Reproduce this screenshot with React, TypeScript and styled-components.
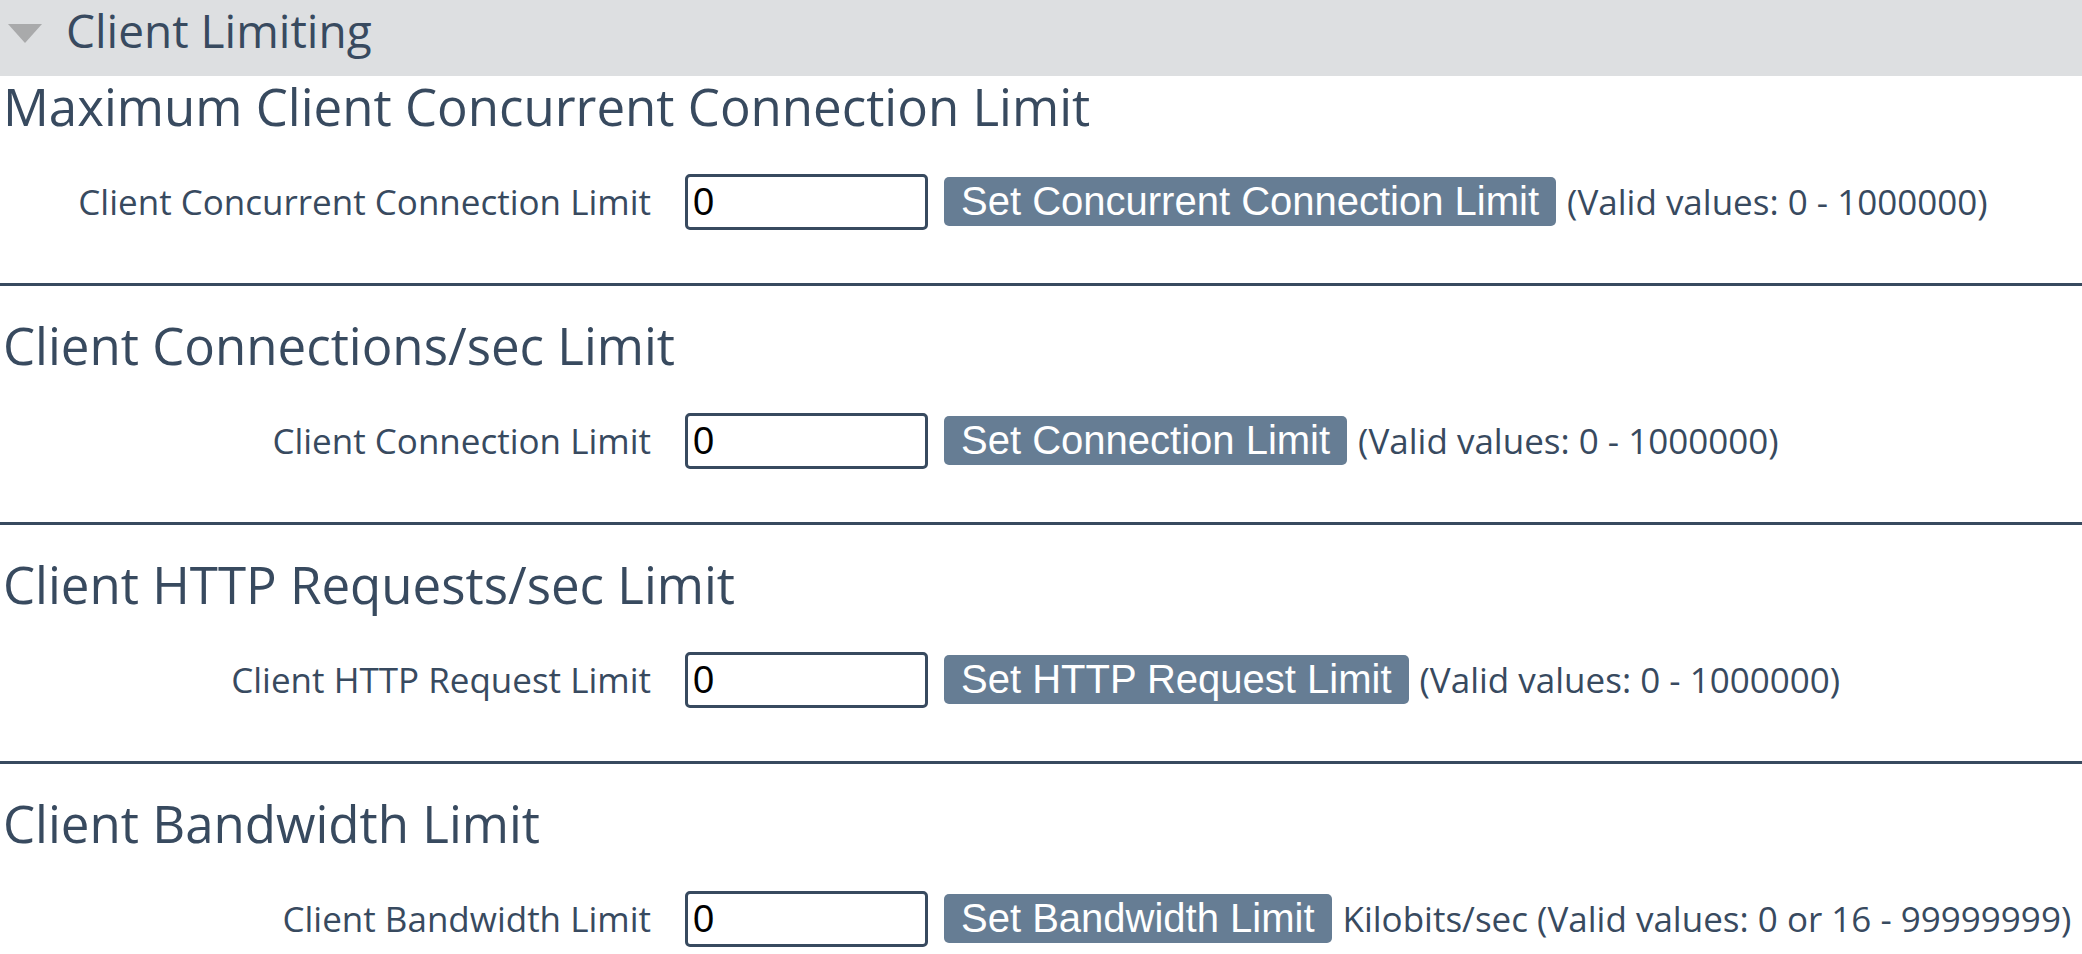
import React from "react";
import styled, { createGlobalStyle } from "styled-components";

type LimitSetting = {
    id: string;
    title: string;
    label: string;
    action: string;
    unit?: string;
    range: string;
};

const settings: LimitSetting[] = [
    {
        id: "concurrent",
        title: "Maximum Client Concurrent Connection Limit",
        label: "Client Concurrent Connection Limit",
        action: "Set Concurrent Connection Limit",
        range: "(Valid values: 0 - 1000000)",
    },
    {
        id: "connections",
        title: "Client Connections/sec Limit",
        label: "Client Connection Limit",
        action: "Set Connection Limit",
        range: "(Valid values: 0 - 1000000)",
    },
    {
        id: "http",
        title: "Client HTTP Requests/sec Limit",
        label: "Client HTTP Request Limit",
        action: "Set HTTP Request Limit",
        range: "(Valid values: 0 - 1000000)",
    },
    {
        id: "bandwidth",
        title: "Client Bandwidth Limit",
        label: "Client Bandwidth Limit",
        action: "Set Bandwidth Limit",
        unit: "Kilobits/sec",
        range: "(Valid values: 0 or 16 - 99999999)",
    },
];

const colors = {
    text: "#384a5f",
    headerBg: "#dddfe1",
    arrow: "#a9aaab",
    button: "#667d94",
};

export default function App() {
    return (
        <>
            <GlobalStyle />
            <Panel>
                <PanelHeader>
                    <Arrow />
                    <PanelTitle>Client Limiting</PanelTitle>
                </PanelHeader>
                {settings.map((item, i) => (
                    <React.Fragment key={item.id}>
                        {i > 0 && <Divider />}
                        <Section>
                            <Heading>{item.title}</Heading>
                            <Row>
                                <Label htmlFor={item.id}>{item.label}</Label>
                                <Input id={item.id} type="text" defaultValue="0" />
                                <SetButton type="button">{item.action}</SetButton>
                                <Hint>
                                    {item.unit ? `${item.unit} ` : ""}
                                    {item.range}
                                </Hint>
                            </Row>
                        </Section>
                    </React.Fragment>
                ))}
            </Panel>
        </>
    );
}

const GlobalStyle = createGlobalStyle`
    body {
        margin: 0;
        background: #ffffff;
        font-family: "Open Sans", "Noto Sans", sans-serif;
        color: ${colors.text};
    }
`;

const Panel = styled.div`
    width: 100%;
`;

const PanelHeader = styled.div`
    box-sizing: border-box;
    display: flex;
    align-items: center;
    height: 76px;
    padding: 0 0 16px 8px;
    background: ${colors.headerBg};
`;

const Arrow = styled.span`
    width: 0;
    height: 0;
    border-left: 17px solid transparent;
    border-right: 17px solid transparent;
    border-top: 19px solid ${colors.arrow};
    margin-top: 6px;
`;

const PanelTitle = styled.h1`
    margin: 0 0 0 24px;
    font-size: 46px;
    font-weight: 400;
    line-height: 1;
`;

const Section = styled.section`
    &:first-of-type {
        margin-top: 1px;
    }
`;

const Heading = styled.h2`
    margin: 0;
    padding-left: 3px;
    font-size: 51px;
    font-weight: 400;
    line-height: 58px;
`;

const Row = styled.div`
    display: flex;
    align-items: baseline;
    margin-top: 39px;
`;

const Label = styled.label`
    width: 651px;
    flex-shrink: 0;
    text-align: right;
    font-size: 35px;
`;

const Input = styled.input`
    box-sizing: border-box;
    width: 243px;
    height: 56px;
    margin-left: 34px;
    padding: 0 5px;
    border: 3px solid ${colors.text};
    border-radius: 5px;
    font-family: "Liberation Sans", Arial, sans-serif;
    font-size: 38px;
    color: #000000;
    background: #ffffff;
    outline: none;
`;

const SetButton = styled.button`
    margin-left: 16px;
    padding: 2px 17px 3px;
    border: none;
    border-radius: 5px;
    background: ${colors.button};
    color: #ffffff;
    font-family: "Liberation Sans", Arial, sans-serif;
    font-size: 40px;
    line-height: 44px;
    cursor: pointer;
`;

const Hint = styled.span`
    margin-left: 11px;
    font-size: 35px;
    white-space: nowrap;
`;

const Divider = styled.hr`
    margin: 53px 0 30px;
    border: none;
    height: 3px;
    background: ${colors.text};
`;
